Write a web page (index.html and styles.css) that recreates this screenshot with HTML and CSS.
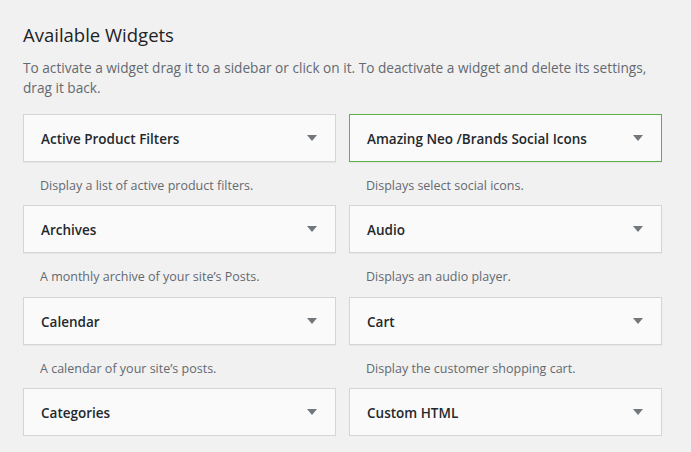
FILE: index.html
```html
<!DOCTYPE html>
<html>
<head>
<meta charset="utf-8">
<link rel="stylesheet" href="styles.css">
</head>
<body>
<div class="wrap">
  <h2 class="heading">Available Widgets</h2>
  <p class="intro">To activate a widget drag it to a sidebar or click on it. To deactivate a widget and delete its settings, drag it back.</p>
  <div class="grid">
    <div class="item">
      <div class="widget"><span class="wtitle">Active Product Filters</span><span class="arrow"></span></div>
      <p class="wdesc">Display a list of active product filters.</p>
    </div>
    <div class="item">
      <div class="widget active"><span class="wtitle">Amazing Neo /Brands Social Icons</span><span class="arrow"></span></div>
      <p class="wdesc">Displays select social icons.</p>
    </div>
    <div class="item">
      <div class="widget"><span class="wtitle">Archives</span><span class="arrow"></span></div>
      <p class="wdesc">A monthly archive of your site’s Posts.</p>
    </div>
    <div class="item">
      <div class="widget"><span class="wtitle">Audio</span><span class="arrow"></span></div>
      <p class="wdesc">Displays an audio player.</p>
    </div>
    <div class="item">
      <div class="widget"><span class="wtitle">Calendar</span><span class="arrow"></span></div>
      <p class="wdesc">A calendar of your site’s posts.</p>
    </div>
    <div class="item">
      <div class="widget"><span class="wtitle">Cart</span><span class="arrow"></span></div>
      <p class="wdesc">Display the customer shopping cart.</p>
    </div>
    <div class="item">
      <div class="widget"><span class="wtitle">Categories</span><span class="arrow"></span></div>
    </div>
    <div class="item">
      <div class="widget"><span class="wtitle">Custom HTML</span><span class="arrow"></span></div>
    </div>
  </div>
</div>
</body>
</html>
```

FILE: styles.css
```css
html, body {
  margin: 0;
  padding: 0;
  background: #f1f1f1;
}
body {
  font-family: "Open Sans", "Noto Sans", sans-serif;
  color: #23282d;
}
.wrap {
  padding: 22px 29px 0 23px;
}
.heading {
  margin: 0;
  font-size: 18.5px;
  font-weight: 400;
  line-height: 26px;
  color: #1d2327;
}
.intro {
  margin: 10px 0 0;
  font-size: 13.65px;
  line-height: 20px;
  color: #646970;
}
.grid {
  margin-top: 16px;
  display: grid;
  grid-template-columns: 313px 313px;
  column-gap: 13px;
}
.widget {
  box-sizing: border-box;
  height: 48px;
  background: #fafafa;
  border: 1px solid #d4d5d8;
  box-shadow: 0 1px 1px rgba(0,0,0,0.04);
  display: flex;
  align-items: center;
  justify-content: space-between;
  padding: 2px 18px 0 17px;
}
.widget.active {
  border-color: #5cb048;
}
.wtitle {
  font-size: 13.5px;
  font-weight: 600;
  color: #23282d;
}
.arrow {
  width: 0;
  height: 0;
  margin-top: -2px;
  border-left: 5px solid transparent;
  border-right: 5px solid transparent;
  border-top: 6px solid #72777c;
}
.wdesc {
  margin: 15px 0 10.3px 17px;
  font-size: 12.5px;
  line-height: 18px;
  color: #646970;
}
```
